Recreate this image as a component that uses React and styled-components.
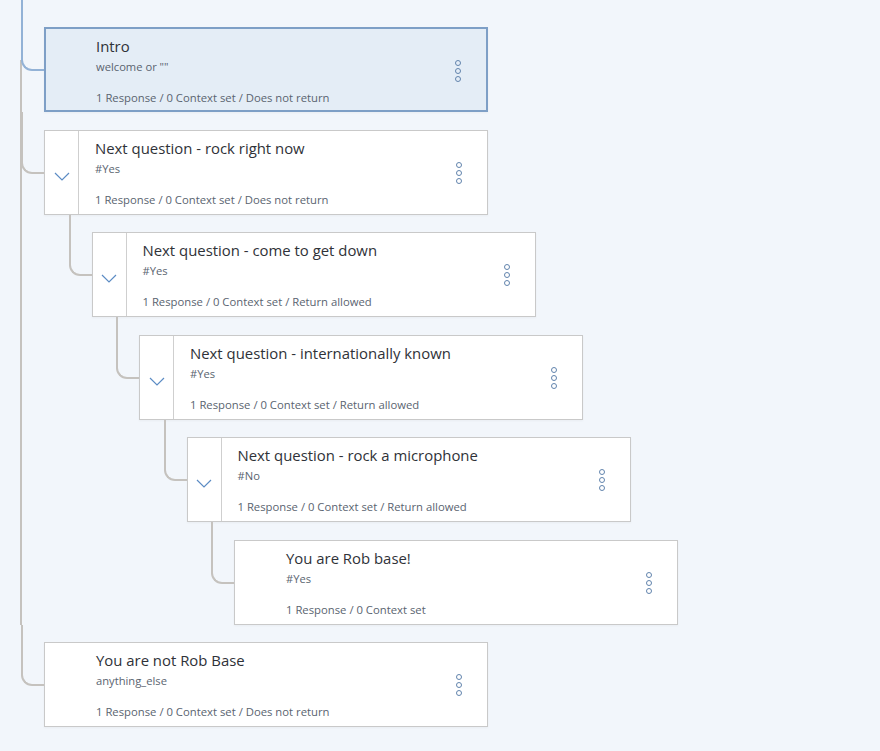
import React from "react";
import styled, { createGlobalStyle } from "styled-components";

const GlobalStyle = createGlobalStyle`
  html, body {
    margin: 0;
    padding: 0;
    background: #f2f6fb;
  }
  body {
    font-family: "Open Sans", "Liberation Sans", sans-serif;
    color: #2f3237;
  }
`;

const nodes = [
  {
    title: "Intro",
    condition: 'welcome or ""',
    footer: "1 Response / 0 Context set / Does not return",
    selected: true,
  },
  {
    title: "Next question - rock right now",
    condition: "#Yes",
    footer: "1 Response / 0 Context set / Does not return",
    children: [
      {
        title: "Next question - come to get down",
        condition: "#Yes",
        footer: "1 Response / 0 Context set / Return allowed",
        children: [
          {
            title: "Next question - internationally known",
            condition: "#Yes",
            footer: "1 Response / 0 Context set / Return allowed",
            children: [
              {
                title: "Next question - rock a microphone",
                condition: "#No",
                footer: "1 Response / 0 Context set / Return allowed",
                children: [
                  {
                    title: "You are Rob base!",
                    condition: "#Yes",
                    footer: "1 Response / 0 Context set",
                  },
                ],
              },
            ],
          },
        ],
      },
    ],
  },
  {
    title: "You are not Rob Base",
    condition: "anything_else",
    footer: "1 Response / 0 Context set / Does not return",
  },
];

const Page = styled.div`
  width: 880px;
  height: 751px;
  overflow: hidden;
`;

const List = styled.ul`
  list-style: none;
  margin: 0;
  padding: 0 0 0 ${(p) => (p.$root ? 44 : 47.5)}px;
`;

const Item = styled.li`
  position: relative;
  padding-top: ${(p) => (p.$first ? 27 : 17.5)}px;

  &::before {
    content: "";
    position: absolute;
    left: -23px;
    top: 0;
    width: 21px;
    height: ${(p) => (p.$first ? 27 : 17.5) + 42}px;
    border-left: 2px solid ${(p) => (p.$selected ? "#93b2d6" : "#c5c2be")};
    border-bottom: 2px solid ${(p) => (p.$selected ? "#93b2d6" : "#c5c2be")};
    border-bottom-left-radius: 11px;
    z-index: 1;
  }

  &:not(:last-child)::after {
    content: "";
    position: absolute;
    left: -24px;
    top: ${(p) => (p.$first ? 60 : 0)}px;
    bottom: 0;
    border-left: 2px solid #c5c2be;
  }
`;

const Card = styled.div`
  position: relative;
  display: flex;
  width: 444px;
  height: 85px;
  box-sizing: border-box;
  background: ${(p) => (p.$selected ? "#e4edf6" : "#ffffff")};
  border: ${(p) => (p.$selected ? "2px solid #7e9fc6" : "1px solid #c9c9c9")};
  box-shadow: 0 1px 2px rgba(0, 0, 0, 0.04);
`;

const Toggle = styled.div`
  flex: 0 0 34px;
  display: flex;
  align-items: flex-start;
  justify-content: center;
  padding-top: 41px;
  box-sizing: border-box;
  border-right: 1px solid #cfcfcf;
`;

const Body = styled.div`
  flex: 1;
  display: flex;
  flex-direction: column;
  padding-left: ${(p) => (p.$indent ? 16 : p.$selected ? 50 : 51)}px;
  padding-top: ${(p) => (p.$selected ? 7 : 7)}px;
  min-width: 0;
`;

const Title = styled.div`
  font-size: 14.9px;
  line-height: 20px;
  color: #2f3238;
  white-space: nowrap;
`;

const Condition = styled.div`
  margin-top: 3px;
  font-size: 11.2px;
  line-height: 16px;
  color: #5a6470;
`;

const Footer = styled.div`
  margin-top: 15px;
  font-size: 11.3px;
  line-height: 16px;
  color: #5a6470;
  white-space: nowrap;
`;

const Menu = styled.div`
  position: absolute;
  right: 25px;
  top: 31px;
  display: flex;
  flex-direction: column;
  gap: 2px;
`;

const Dot = styled.span`
  width: 4px;
  height: 4px;
  border-radius: 50%;
  border: 1.5px solid #6284ad;
`;

const Chevron = () => (
  <svg width="16" height="9" viewBox="0 0 16 9">
    <polyline
      points="1,1 8,8 15,1"
      fill="none"
      stroke="#5c8cc4"
      strokeWidth="1.2"
    />
  </svg>
);

const Node = ({ node, first }) => {
  const hasKids = node.children && node.children.length > 0;
  return (
    <Item $selected={node.selected} $first={first}>
      <Card $selected={node.selected}>
        {hasKids && (
          <Toggle>
            <Chevron />
          </Toggle>
        )}
        <Body $indent={hasKids} $selected={node.selected}>
          <Title>{node.title}</Title>
          <Condition>{node.condition}</Condition>
          <Footer>{node.footer}</Footer>
        </Body>
        <Menu>
          <Dot />
          <Dot />
          <Dot />
        </Menu>
      </Card>
      {hasKids && (
        <List>
          {node.children.map((c, i) => (
            <Node key={i} node={c} />
          ))}
        </List>
      )}
    </Item>
  );
};

export default function App() {
  return (
    <Page>
      <GlobalStyle />
      <List $root>
        {nodes.map((n, i) => (
          <Node key={i} node={n} first={i === 0} />
        ))}
      </List>
    </Page>
  );
}
